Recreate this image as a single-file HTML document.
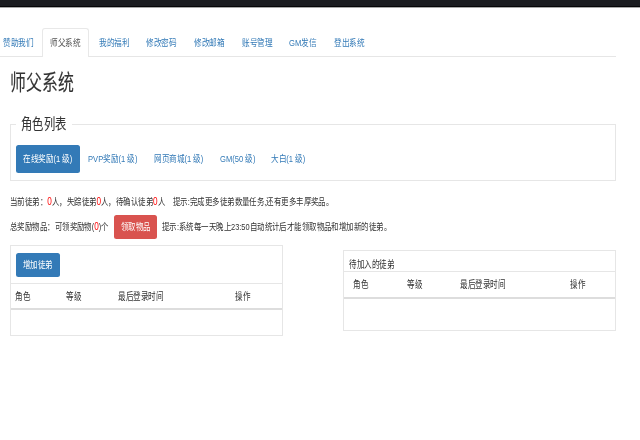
<!DOCTYPE html>
<html lang="zh-CN"><head><meta charset="utf-8">
<style>
*{box-sizing:border-box;margin:0;padding:0}
html,body{width:640px;height:440px;overflow:hidden;background:#fff}
body{font-family:"Liberation Sans",sans-serif;color:#333;position:relative}
#w{position:absolute;left:0;top:0;width:640px;height:440px;filter:brightness(1)}
.b{position:absolute}
.t{position:absolute;white-space:nowrap;line-height:1;transform-origin:0 50%}
</style></head><body>
<div id="w">
<div class="b" style="left:0px;top:0px;width:640px;height:6px;background:#1b1c20"></div>
<div class="b" style="left:0px;top:6px;width:640px;height:1px;background:#060608"></div>
<div class="b" style="left:0px;top:7px;width:640px;height:1px;background:#a8a8a8"></div>
<div class="b" style="left:0px;top:56px;width:616px;height:1px;background:#e6e6e6"></div>
<div class="b" style="left:42px;top:28px;width:47px;height:29px;border:1px solid #e8e8e8;border-bottom:0;border-radius:3px 3px 0 0;background:#fff"></div>
<div class="t" style="left:2.77px;top:26.70px;font-size:31px;color:#337ab7;transform:scale(0.24677,0.30600);">赞助我们</div>
<div class="t" style="left:50.37px;top:26.70px;font-size:31px;color:#555;transform:scale(0.24677,0.30600);">师父系统</div>
<div class="t" style="left:98.52px;top:26.70px;font-size:31px;color:#337ab7;transform:scale(0.24677,0.30600);">我的福利</div>
<div class="t" style="left:146.02px;top:26.70px;font-size:31px;color:#337ab7;transform:scale(0.24677,0.30600);">修改密码</div>
<div class="t" style="left:194.02px;top:26.70px;font-size:31px;color:#337ab7;transform:scale(0.24677,0.30600);">修改邮箱</div>
<div class="t" style="left:241.52px;top:26.70px;font-size:31px;color:#337ab7;transform:scale(0.24677,0.30600);">账号管理</div>
<div class="t" style="left:289.27px;top:26.70px;font-size:31px;color:#337ab7;transform:scale(0.24677,0.30600);">GM发信</div>
<div class="t" style="left:334.02px;top:26.70px;font-size:31px;color:#337ab7;transform:scale(0.24677,0.30600);">登出系统</div>
<div class="t" style="left:10.12px;top:51.00px;font-size:64px;color:#333;transform:scale(0.24844,0.33042);-webkit-text-stroke:0.4px #333">师父系统</div>
<div class="b" style="left:10px;top:124px;width:606px;height:57px;border:1px solid #e6e6e6"></div>
<div class="b" style="left:15.5px;top:120px;width:56px;height:8px;background:#fff"></div>
<div class="t" style="left:21.16px;top:100.80px;font-size:45px;color:#333;transform:scale(0.25111,0.32644);-webkit-text-stroke:0.2px #333">角色列表</div>
<div class="b" style="left:15.5px;top:145px;width:64.5px;height:27.5px;background:#337ab7;border-radius:2.5px"></div>
<div class="t" style="left:23.27px;top:143.60px;font-size:30px;color:#fff;transform:scale(0.25333,0.31667);">在线奖励(1 级)</div>
<div class="t" style="left:88.02px;top:143.60px;font-size:30px;color:#337ab7;transform:scale(0.25333,0.31667);">PVP奖励(1 级)</div>
<div class="t" style="left:153.67px;top:143.60px;font-size:30px;color:#337ab7;transform:scale(0.25333,0.31667);">网页商城(1 级)</div>
<div class="t" style="left:219.67px;top:143.60px;font-size:30px;color:#337ab7;transform:scale(0.25333,0.31667);">GM(50 级)</div>
<div class="t" style="left:270.97px;top:143.60px;font-size:30px;color:#337ab7;transform:scale(0.25333,0.31667);">大白(1 级)</div>
<div class="t" style="left:10.38px;top:187.00px;font-size:30px;color:#333;transform:scale(0.24800,0.32240);">当前徒弟：<span style="color:#f00;font-size:1.1em;line-height:0">0</span>人，失踪徒弟<span style="color:#f00;font-size:1.1em;line-height:0">0</span>人，待确认徒弟<span style="color:#f00;font-size:1.1em;line-height:0">0</span>人<span style="display:inline-block;width:32px"></span>提示:完成更多徒弟数量任务,还有更多丰厚奖品。</div>
<div class="t" style="left:10.38px;top:211.50px;font-size:30px;color:#333;transform:scale(0.24800,0.32240);">总奖励物品：可领奖励物(<span style="color:#f00;font-size:1.1em;line-height:0">0</span>)个</div>
<div class="b" style="left:114px;top:215px;width:43px;height:24px;background:#d9534f;border-radius:2.5px"></div>
<div class="t" style="left:120.78px;top:212.00px;font-size:30px;color:#fff;transform:scale(0.24800,0.32240);">领取物品</div>
<div class="t" style="left:161.78px;top:211.50px;font-size:30px;color:#333;transform:scale(0.24800,0.32240);">提示:系统每一天晚上23:50自动统计后才能领取物品和增加新的徒弟。</div>
<div class="b" style="left:10px;top:245px;width:273px;height:91px;border:1px solid #e6e6e6"></div>
<div class="b" style="left:16px;top:253px;width:44px;height:23.5px;background:#337ab7;border-radius:2.5px"></div>
<div class="t" style="left:22.78px;top:250.00px;font-size:30px;color:#fff;transform:scale(0.24800,0.32240);">增加徒弟</div>
<div class="b" style="left:11px;top:283px;width:271px;height:1px;background:#e6e6e6"></div>
<div class="t" style="left:14.77px;top:281.80px;font-size:30px;color:#333;transform:scale(0.25167,0.32465);">角色</div>
<div class="t" style="left:66.17px;top:281.80px;font-size:30px;color:#333;transform:scale(0.25167,0.32465);">等级</div>
<div class="t" style="left:117.57px;top:281.80px;font-size:30px;color:#333;transform:scale(0.25167,0.32465);">最后登录时间</div>
<div class="t" style="left:234.77px;top:281.80px;font-size:30px;color:#333;transform:scale(0.25167,0.32465);">操作</div>
<div class="b" style="left:11px;top:308px;width:271px;height:2px;background:#ddd"></div>
<div class="b" style="left:343px;top:250px;width:273px;height:81px;border:1px solid #e6e6e6"></div>
<div class="t" style="left:349.17px;top:249.75px;font-size:30px;color:#333;transform:scale(0.25167,0.32465);">待加入的徒弟</div>
<div class="b" style="left:344px;top:271px;width:271px;height:1px;background:#e6e6e6"></div>
<div class="t" style="left:353.17px;top:269.80px;font-size:30px;color:#333;transform:scale(0.25167,0.32465);">角色</div>
<div class="t" style="left:406.57px;top:269.80px;font-size:30px;color:#333;transform:scale(0.25167,0.32465);">等级</div>
<div class="t" style="left:460.37px;top:269.80px;font-size:30px;color:#333;transform:scale(0.25167,0.32465);">最后登录时间</div>
<div class="t" style="left:570.37px;top:269.80px;font-size:30px;color:#333;transform:scale(0.25167,0.32465);">操作</div>
<div class="b" style="left:344px;top:297px;width:271px;height:2px;background:#ddd"></div>
</div></body></html>
